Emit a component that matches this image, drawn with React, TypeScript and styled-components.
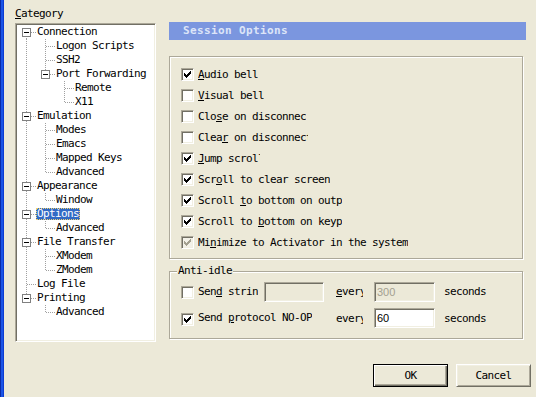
import React from 'react';
import styled, { createGlobalStyle } from 'styled-components';

// Luna "classic" system colours
const FACE = '#ECE9D8';
const SHADOW = '#ACA899';
const DARK = '#716F64';
const LIGHT = '#F1EFE2';

const GlobalStyle = createGlobalStyle`
  html, body {
    margin: 0;
    padding: 0;
    background: ${FACE};
  }
`;

const Window = styled.div`
  width: 536px;
  height: 397px;
  display: flex;
  overflow: hidden;
  background: ${FACE};
  color: #000;
  font-family: "DejaVu Sans Mono", "Liberation Mono", monospace;
  font-size: 11px;
  letter-spacing: -0.62px;
`;

const Frame = styled.div`
  flex: none;
  width: 4px;
  background: linear-gradient(to right, #0A2BA8 0 1px, #1B54E6 1px 3px, #0C3CD2 3px 4px);
`;

const Body = styled.div`
  flex: 1;
  display: flex;
  flex-direction: column;
  padding: 6px 5px 0 11px;
`;

const Main = styled.div`
  display: flex;
  gap: 13px;
`;

const LeftColumn = styled.div`
  width: 141px;
  display: flex;
  flex-direction: column;
`;

const Caption = styled.div`
  height: 15px;
  line-height: 15px;
  margin-bottom: 2px;
`;

const U = styled.span`
  text-decoration: underline;
  text-underline-offset: 1px;
`;

const TreeBox = styled.div`
  height: 319px;
  box-sizing: border-box;
  padding: 1px;
  background: #fff;
  border: 1px solid;
  border-color: ${SHADOW} #fff #fff ${SHADOW};
  box-shadow: inset 1px 1px 0 ${DARK}, inset -1px -1px 0 ${LIGHT};
`;

const TreeRow = styled.div`
  display: flex;
  align-items: center;
  height: 14px;
`;

const GuideSvg = styled.svg`
  flex: none;
  display: block;
`;

const NodeLabel = styled.span<{ $selected?: boolean }>`
  height: 12px;
  line-height: 12px;
  padding: 0 1px;
  white-space: nowrap;
  background: ${p => (p.$selected ? '#316AC5' : 'transparent')};
  color: ${p => (p.$selected ? '#fff' : '#000')};
  outline: ${p => (p.$selected ? '1px dotted #F0D070' : 'none')};
  outline-offset: -1px;
`;

const RightColumn = styled.div`
  width: 357px;
  display: flex;
  flex-direction: column;
`;

const Header = styled.div`
  margin-top: 16px;
  height: 18px;
  line-height: 18px;
  padding-left: 14px;
  background: #7B96DF;
  color: #DDE5F8;
  font-weight: bold;
  letter-spacing: 0.38px;
`;

const Group = styled.div<{ $top: number; $height: number }>`
  position: relative;
  width: 354px;
  height: ${p => p.$height}px;
  margin-top: ${p => p.$top}px;
  box-sizing: border-box;
  border: 1px solid ${SHADOW};
  box-shadow: 1px 1px 0 #fff, inset 1px 1px 0 #fff;
`;

const GroupTitle = styled.span`
  position: absolute;
  top: -8px;
  left: 7px;
  padding: 0 1px;
  line-height: 14px;
  background: ${FACE};
`;

const OptionList = styled.div`
  display: flex;
  flex-direction: column;
  padding: 7px 0 0 11px;
`;

const CheckRow = styled.label`
  display: flex;
  align-items: center;
  gap: 4px;
  height: 21px;
`;

const Box = styled.span<{ $disabled?: boolean }>`
  flex: none;
  width: 13px;
  height: 13px;
  box-sizing: border-box;
  padding: 2px;
  display: inline-flex;
  border: 1px solid;
  border-color: ${SHADOW} #fff #fff ${SHADOW};
  box-shadow: inset 1px 1px 0 ${DARK}, inset -1px -1px 0 ${LIGHT};
  background: ${p => (p.$disabled ? '#F3F1E8' : '#fff')};
`;

const Text = styled.span<{ $clip?: number }>`
  display: inline-block;
  white-space: nowrap;
  overflow: hidden;
  line-height: 14px;
  width: ${p => (p.$clip ? `${p.$clip}px` : 'auto')};
`;

const IdleGrid = styled.div`
  display: grid;
  grid-template-columns: 17px 66px 72px 38px 70px auto;
  grid-template-rows: 20px 22px;
  row-gap: 6px;
  align-items: center;
  padding: 10px 0 0 11px;
`;

const Wide = styled.div`
  grid-column: 2 / 4;
`;

const Field = styled.div<{ $width: number; $disabled?: boolean }>`
  align-self: start;
  width: ${p => p.$width}px;
  height: 20px;
  box-sizing: border-box;
  padding: 2px 1px 0 2px;
  border: 1px solid;
  border-color: ${SHADOW} #fff #fff ${SHADOW};
  box-shadow: inset 1px 1px 0 ${DARK}, inset -1px -1px 0 ${LIGHT};
  background: ${p => (p.$disabled ? FACE : '#fff')};
  color: ${p => (p.$disabled ? '#A3A090' : '#000')};
  font-family: "Liberation Sans", Arial, sans-serif;
  font-size: 11px;
  letter-spacing: 0;
  line-height: 14px;
`;

const Footer = styled.div`
  display: flex;
  justify-content: flex-end;
  gap: 8px;
  margin-top: 22px;
`;

const Button = styled.button<{ $default?: boolean }>`
  width: 75px;
  height: 23px;
  padding: 0;
  font: inherit;
  letter-spacing: inherit;
  color: #000;
  background: ${FACE};
  border: 1px solid;
  border-color: ${p => (p.$default ? '#000' : `#fff ${DARK} ${DARK} #fff`)};
  box-shadow: ${p =>
    p.$default
      ? `inset 1px 1px 0 #fff, inset -1px -1px 0 ${DARK}, inset -2px -2px 0 ${SHADOW}`
      : `inset 1px 1px 0 ${LIGHT}, inset -1px -1px 0 ${SHADOW}`};
`;

type Guide = 'p' | 'b' | 't' | 'e' | 'f';

const Dots = ({ x1, y1, x2, y2 }: { x1: number; y1: number; x2: number; y2: number }) => (
  <line x1={x1} y1={y1} x2={x2} y2={y2} stroke="#A0A0A0" strokeDasharray="1 1" />
);

const GuideCell = ({ kind, expander }: { kind: Guide; expander?: boolean }) => (
  <GuideSvg width="19" height="14" viewBox="0 0 19 14">
    {(kind === 'p' || kind === 't') && <Dots x1={9.5} y1={0} x2={9.5} y2={14} />}
    {kind === 'e' && <Dots x1={9.5} y1={0} x2={9.5} y2={8} />}
    {kind === 'f' && <Dots x1={9.5} y1={7} x2={9.5} y2={14} />}
    {(kind === 't' || kind === 'e' || kind === 'f') && <Dots x1={10} y1={7.5} x2={19} y2={7.5} />}
    {expander && (
      <>
        <rect x="5.5" y="3.5" width="8" height="8" fill="#fff" stroke="#808080" />
        <line x1="7" y1="7.5" x2="12" y2="7.5" stroke="#000" />
      </>
    )}
  </GuideSvg>
);

type Node = { label: string; guides: Guide[]; open?: boolean; selected?: boolean };

const tree: Node[] = [
  { label: 'Connection', guides: ['f'], open: true },
  { label: 'Logon Scripts', guides: ['p', 't'] },
  { label: 'SSH2', guides: ['p', 't'] },
  { label: 'Port Forwarding', guides: ['p', 'e'], open: true },
  { label: 'Remote', guides: ['p', 'b', 't'] },
  { label: 'X11', guides: ['p', 'b', 'e'] },
  { label: 'Emulation', guides: ['t'], open: true },
  { label: 'Modes', guides: ['p', 't'] },
  { label: 'Emacs', guides: ['p', 't'] },
  { label: 'Mapped Keys', guides: ['p', 't'] },
  { label: 'Advanced', guides: ['p', 'e'] },
  { label: 'Appearance', guides: ['t'], open: true },
  { label: 'Window', guides: ['p', 'e'] },
  { label: 'Options', guides: ['t'], open: true, selected: true },
  { label: 'Advanced', guides: ['p', 'e'] },
  { label: 'File Transfer', guides: ['t'], open: true },
  { label: 'XModem', guides: ['p', 't'] },
  { label: 'ZModem', guides: ['p', 'e'] },
  { label: 'Log File', guides: ['t'] },
  { label: 'Printing', guides: ['e'], open: true },
  { label: 'Advanced', guides: ['b', 'e'] },
];

const CHECK =
  'M6 0h1v1h-1z M5 1h2v1h-2z M0 2h1v1h-1z M4 2h3v1h-3z M0 3h2v1h-2z M3 3h3v1h-3z M0 4h5v1h-5z M1 5h3v1h-3z M2 6h1v1h-1z';

const CheckBox = ({ checked, disabled }: { checked?: boolean; disabled?: boolean }) => (
  <Box $disabled={disabled}>
    {checked && (
      <svg width="7" height="7" viewBox="0 0 7 7">
        <path d={CHECK} fill={disabled ? '#A3A090' : '#000'} />
      </svg>
    )}
  </Box>
);

// label split around the access-key character
type Option = { pre: string; key: string; post: string; checked?: boolean; disabled?: boolean; clip?: number };

const options: Option[] = [
  { pre: '', key: 'A', post: 'udio bell', checked: true },
  { pre: '', key: 'V', post: 'isual bell' },
  { pre: 'Clo', key: 's', post: 'e on disconnect', clip: 108 },
  { pre: 'Clea', key: 'r', post: ' on disconnect', clip: 110 },
  { pre: '', key: 'J', post: 'ump scroll', checked: true, clip: 62 },
  { pre: 'Scr', key: 'o', post: 'll to clear screen', checked: true },
  { pre: 'Scroll ', key: 't', post: 'o bottom on output', checked: true, clip: 144 },
  { pre: 'Scroll to ', key: 'b', post: 'ottom on keypress', checked: true, clip: 144 },
  { pre: 'Mi', key: 'n', post: 'imize to Activator in the system', checked: true, disabled: true },
];

export default function App() {
  return (
    <Window>
      <GlobalStyle />
      <Frame />
      <Body>
        <Main>
          <LeftColumn>
            <Caption>
              <U>C</U>ategory
            </Caption>
            <TreeBox>
              {tree.map((n, i) => (
                <TreeRow key={i}>
                  {n.guides.map((g, j) => (
                    <GuideCell key={j} kind={g} expander={n.open && j === n.guides.length - 1} />
                  ))}
                  <NodeLabel $selected={n.selected}>{n.label}</NodeLabel>
                </TreeRow>
              ))}
            </TreeBox>
          </LeftColumn>

          <RightColumn>
            <Header>Session Options</Header>

            <Group $top={16} $height={203}>
              <OptionList>
                {options.map((o, i) => (
                  <CheckRow key={i}>
                    <CheckBox checked={o.checked} disabled={o.disabled} />
                    <Text $clip={o.clip}>
                      {o.pre}
                      <U>{o.key}</U>
                      {o.post}
                    </Text>
                  </CheckRow>
                ))}
              </OptionList>
            </Group>

            <Group $top={12} $height={68}>
              <GroupTitle>Anti-idle</GroupTitle>
              <IdleGrid>
                <CheckBox />
                <Text $clip={60}>
                  Sen<U>d</U> string
                </Text>
                <Field $width={60} $disabled />
                <Text $clip={27}>
                  <U>e</U>very
                </Text>
                <Field $width={61} $disabled>300</Field>
                <Text>seconds</Text>

                <CheckBox checked />
                <Wide>
                  <Text>
                    Send <U>p</U>rotocol NO-OP
                  </Text>
                </Wide>
                <Text $clip={27}>every</Text>
                <Field $width={61}>60</Field>
                <Text>seconds</Text>
              </IdleGrid>
            </Group>
          </RightColumn>
        </Main>

        <Footer>
          <Button $default>OK</Button>
          <Button>Cancel</Button>
        </Footer>
      </Body>
    </Window>
  );
}
